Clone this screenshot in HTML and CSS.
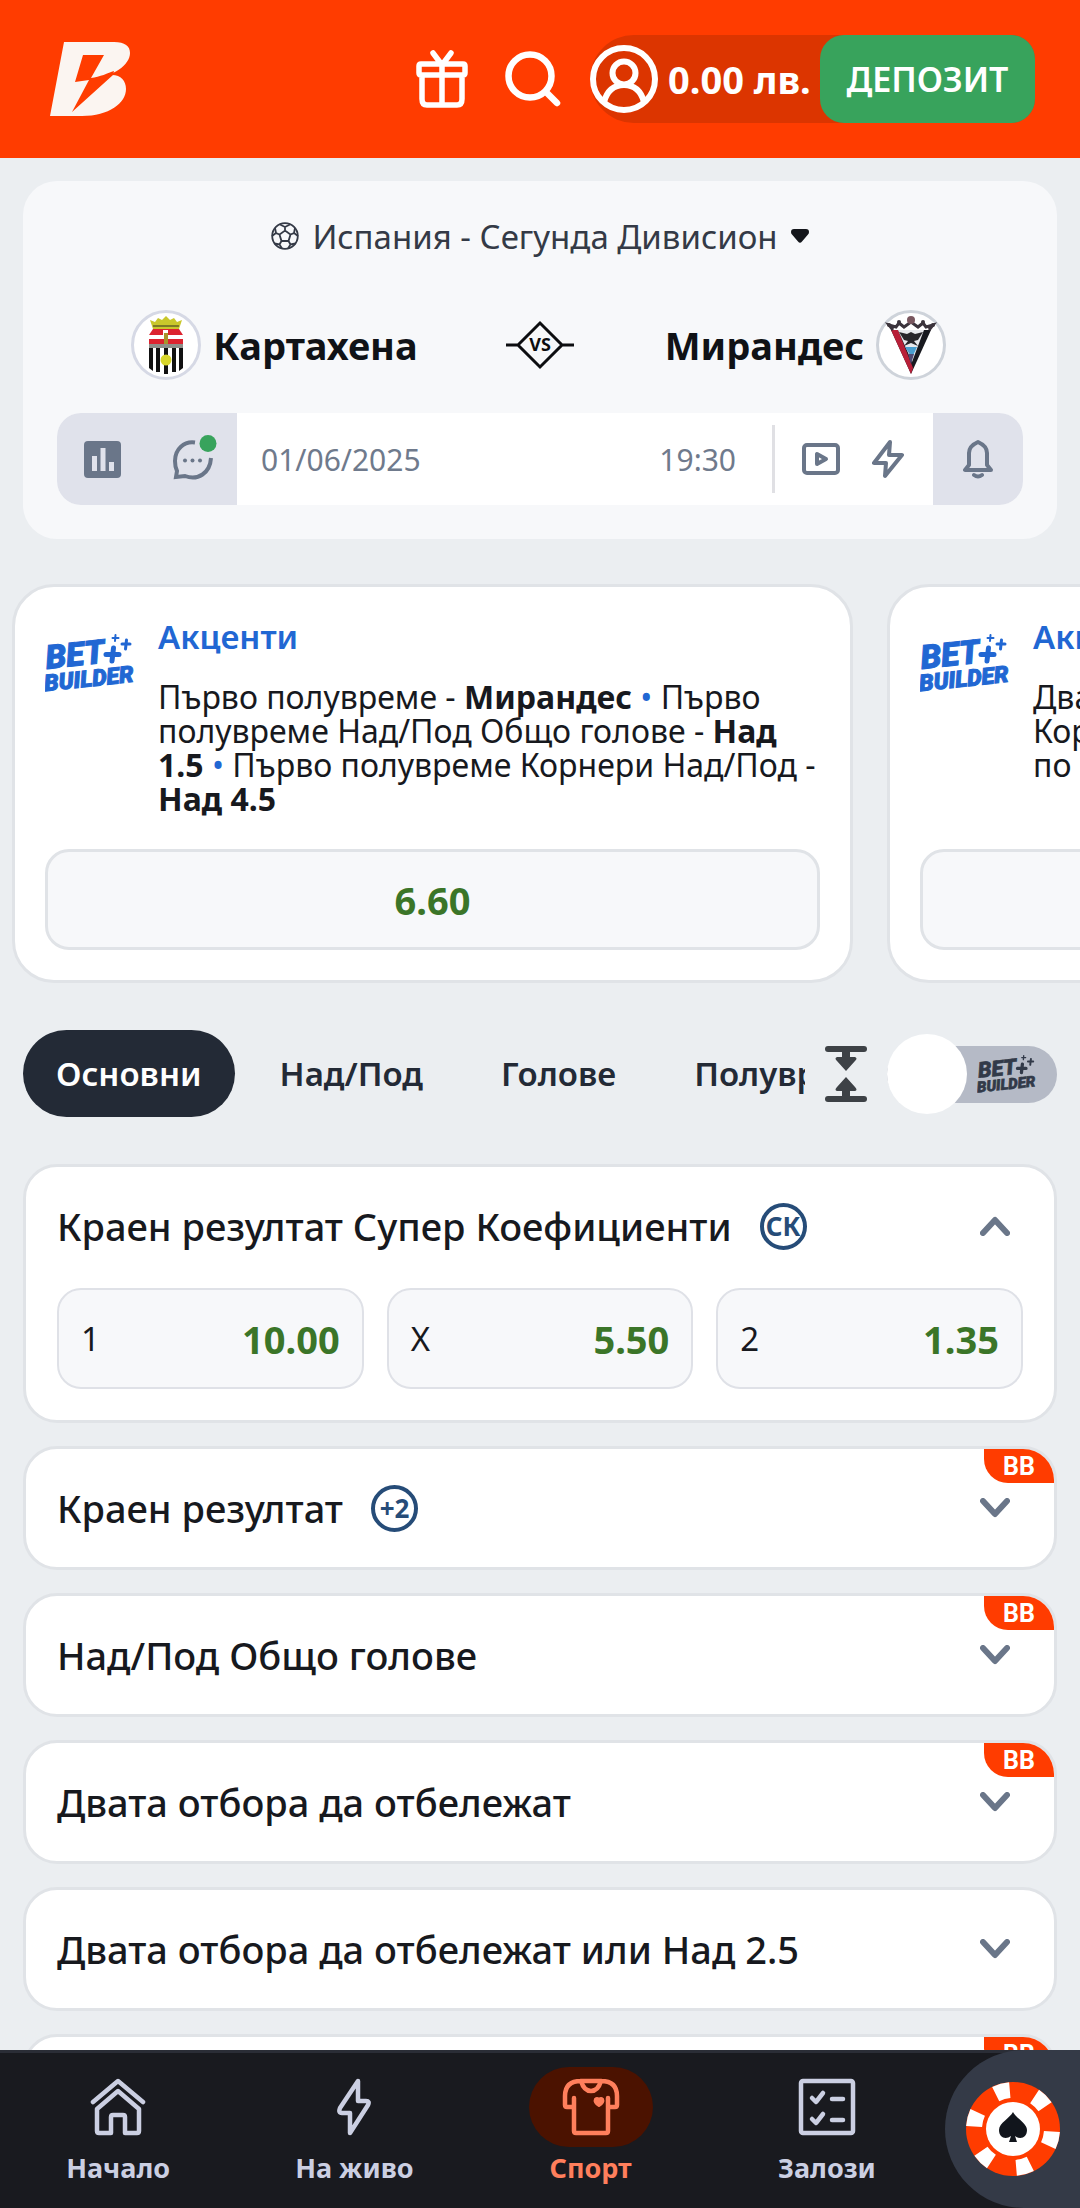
FILE: index.html
```html
<!DOCTYPE html>
<html lang="bg">
<head>
<meta charset="utf-8">
<meta name="viewport" content="width=device-width, initial-scale=1">
<title>Картахена - Мирандес</title>
<link rel="stylesheet" href="styles.css">
</head>
<body>
<svg class="defs" aria-hidden="true">
  <symbol id="sparks" viewBox="0 0 90 58">
    <g stroke="currentColor" stroke-linecap="round">
      <path stroke-width="5" d="M61 20.500h13M68.500 14l-1.500 13"/>
      <path stroke-width="3" d="M77 10h8M81.500 6l-1 9"/>
      <path stroke-width="2" d="M67.500 4h6M70.500 1l-.500 6"/>
    </g>
  </symbol>
  <symbol id="chevron" viewBox="0 0 30 20"><path d="M3 3l12 13L27 3" fill="none" stroke="currentColor" stroke-width="6" stroke-linecap="round" stroke-linejoin="round"/></symbol>
</svg>
<div class="app">
  <header class="topbar">
    <a class="brand" href="#" aria-label="Начало">
      <svg width="80" height="76" viewBox="0 0 80 76"><path fill="#fbf5f1" d="M14 1h50c11 0 16 4 16 11 0 12-17 24-39 26 7-2 13-4 21-4 9 0 14 6 14 14 0 14-17 27-44 27H0z"/><path fill="#ff3c00" d="M33 14h21L41 37c9-1 17-5 23-7l-1 4L22 71l17-32-14 2z"/></svg>
    </a>
    <button class="icon-btn" aria-label="Подаръци">
      <svg width="52" height="58" viewBox="0 0 52 58" fill="none" stroke="#fff" stroke-width="5.500" stroke-linecap="round" stroke-linejoin="round"><path d="M17 3l9 12 9-12M5 14h42q2 0 2 2v7q0 2-2 2H5q-2 0-2-2v-7q0-2 2-2zM6 26v23q0 6 5 6h30q5 0 5-6V26M26 14v41"/></svg>
    </button>
    <button class="icon-btn" aria-label="Търсене">
      <svg width="56" height="56" viewBox="0 0 56 56" fill="none" stroke="#fff" stroke-width="6.500" stroke-linecap="round"><circle cx="25" cy="25" r="21.500"/><path d="M41 41l11 11"/></svg>
    </button>
    <div class="wallet">
      <button class="account">
        <svg width="68" height="68" viewBox="0 0 68 68" fill="none" stroke="#fff" stroke-width="6"><circle cx="34" cy="34" r="31"/><circle cx="34" cy="28" r="11.500"/><path d="M14 57c3-11 10-17 20-17s17 6 20 17"/></svg>
        <span>0.00 лв.</span>
      </button>
      <button class="deposit">ДЕПОЗИТ</button>
    </div>
  </header>

  <main class="content">
    <section class="match">
      <button class="league">
        <svg width="28" height="28" viewBox="0 0 28 28" fill="none" stroke="#343a46" stroke-width="1.800"><circle cx="14" cy="14" r="12.800"/><path d="M14 8.500l5.500 4-2 6.500h-7l-2-6.500zM14 8.500V5l-5-2.500M14 5l5-2.500M19.500 12.500l3.500-1.500 1-5M23 11l4 3M17.500 19l2 3.500 5-1M19.500 22.500L17 26.500M10.500 19l-2 3.500-5-1M8.500 22.500l2.500 4M8.500 12.500L5 11 4 6M5 11l-4 3"/></svg>
        <span>Испания - Сегунда Дивисион</span>
        <svg width="18" height="14" viewBox="0 0 18 14"><path fill="#14161b" d="M3 0h12q3 0 3 3 0 1.500-1 2.500l-6 7q-2 2.500-4 0l-6-7Q0 4.500 0 3q0-3 3-3z"/></svg>
      </button>
      <div class="teams">
        <div class="team">
          <svg class="crest" width="70" height="70" viewBox="0 0 70 70"><circle cx="35" cy="35" r="33.500" fill="#fff" stroke="#d6d9e5" stroke-width="3"/><path fill="#c9c72b" d="M19 10l5 2 3-4 4 2 4-4 4 4 4-2 3 4 5-2-3 9H22z"/><path fill="#7c7a25" d="M22 15h26v2H22z"/><path fill="#dc2430" d="M22 19h26l4 6v12H18V25z"/><path fill="#fff" d="M32 20h5v5h15v4H18v-4h14z"/><path fill="#a8942c" d="M33 23h4v11h-4z"/><path fill="#8d8f8a" d="M18 34h34v4H18z"/><path fill="#fff" d="M18 38h34v21l-4 3H22l-4-3z"/><path fill="#111" d="M18 38h4v23l-4-3zM25 38h4v24h-4zM33 38h4v26h-4zM41 38h4v24h-4zM48 38h4v20l-4 3z"/><circle cx="35" cy="50" r="5.500" fill="#d8d62b"/></svg>
          <strong>Картахена</strong>
        </div>
        <svg class="versus" width="68" height="52" viewBox="0 0 68 52" fill="none" stroke="#0c0d10" stroke-width="3"><path d="M0 26h12M56 26h12M12 26L34 4l22 22-22 22z"/><text class="versus-type" x="34" y="32" text-anchor="middle" stroke="none">VS</text></svg>
        <div class="team">
          <strong>Мирандес</strong>
          <svg class="crest" width="70" height="70" viewBox="0 0 70 70"><circle cx="35" cy="35" r="33.500" fill="#fff" stroke="#ced3da" stroke-width="3"/><path fill="#18191f" d="M15 20h40L35 64z"/><path fill="#b81f38" d="M15 20h7l15 38-2 6z"/><path fill="#e9eaee" d="M22 20h26L36 52z"/><path fill="#28262b" d="M23 22l8 2 4-2 4 2 8-2-5 8-4 1 4 5-7-3-7 3 4-5-4-1z"/><path fill="#4b9fd0" d="M29 37h12l-5 11z"/><path fill="#4e4b75" d="M32 44h6l-3 10z"/><path d="M17 20l-4-5 7 2 3-4 5 4 7-5 7 5 5-4 3 4 7-2-4 5" fill="none" stroke="#3b343c" stroke-width="3"/><g fill="#3b343c"><circle cx="13" cy="15" r="2"/><circle cx="23" cy="12" r="2"/><circle cx="47" cy="12" r="2"/><circle cx="57" cy="15" r="2"/></g><circle cx="35" cy="10" r="4" fill="#79575f"/></svg>
        </div>
      </div>
      <div class="infobar">
        <button class="info-btn shaded" aria-label="Статистика"><svg width="37" height="37" viewBox="0 0 37 37"><rect width="37" height="37" rx="4" fill="#6a7689"/><path fill="#e0e2eb" d="M8 15h5v15H8zM16.500 7h5v23h-5zM25 21h5v9h-5z"/></svg></button>
        <button class="info-btn shaded" aria-label="Чат"><svg width="50" height="50" viewBox="-3 -2 50 50" fill="none"><g transform="translate(3)"><path stroke="#6a7689" stroke-width="4" d="M22 6.500C11 5 2 13 2 25q0 6 2 10L3 41l9-1c13 5 25-3 26-18"/><g fill="#6a7689"><circle cx="12" cy="24.500" r="2"/><circle cx="19.500" cy="24.500" r="2"/><circle cx="27" cy="24.500" r="2"/></g></g><circle cx="38" cy="7.500" r="8.500" fill="#38a35c"/></svg></button>
        <div class="schedule"><time>01/06/2025</time><time>19:30</time></div>
        <div class="media">
          <button class="media-btn" aria-label="Видео"><svg width="38" height="32" viewBox="0 0 38 32" fill="none" stroke="#6a7689" stroke-width="4" stroke-linejoin="round"><rect x="2" y="2" width="34" height="28" rx="3"/><path d="M15 11v10l9-5z"/></svg></button>
          <button class="media-btn" aria-label="На живо"><svg width="32" height="38" viewBox="0 0 32 38" fill="none" stroke="#6a7689" stroke-width="4" stroke-linejoin="round"><path d="M18 2L2 23h12l-1 13 17-21H17z"/></svg></button>
        </div>
        <button class="info-btn shaded" aria-label="Известия"><svg width="32" height="40" viewBox="0 0 32 40" fill="none" stroke="#6a7689" stroke-width="4" stroke-linejoin="round" stroke-linecap="round"><path d="M3 31h26l-4-5V14q0-7-9-11Q7 7 7 14v12zM12 36q4 3 8 0"/></svg></button>
      </div>
    </section>

    <section class="highlights">
      <article class="combo">
        <div class="combo-info">
          <svg class="bb-logo" width="90" height="58" viewBox="0 0 90 58" role="img" aria-label="Bet Builder"><g class="logo-type" transform="rotate(-6 2 56)"><text x="4" y="35" font-size="33">BET</text><text x="0" y="57" font-size="23">BUILDER</text></g><use href="#sparks"/></svg>
          <div class="combo-text">
            <h2>Акценти</h2>
            <p>Първо полувреме - <b>Мирандес</b> <i>•</i> Първо полувреме Над/Под Общо голове - <b>Над 1.5</b> <i>•</i> Първо полувреме Корнери Над/Под - <b>Над 4.5</b></p>
          </div>
        </div>
        <button class="combo-odds">6.60</button>
      </article>
      <article class="combo">
        <div class="combo-info">
          <svg class="bb-logo" width="90" height="58" viewBox="0 0 90 58" role="img" aria-label="Bet Builder"><g class="logo-type" transform="rotate(-6 2 56)"><text x="4" y="35" font-size="33">BET</text><text x="0" y="57" font-size="23">BUILDER</text></g><use href="#sparks"/></svg>
          <div class="combo-text">
            <h2>Акценти</h2>
            <p>Двата<br>Корнери<br>по</p>
          </div>
        </div>
        <button class="combo-odds" aria-label="Коефициент"></button>
      </article>
    </section>

    <div class="filters">
      <nav class="tabs">
        <button class="tab active">Основни</button>
        <button class="tab">Над/Под</button>
        <button class="tab">Голове</button>
        <button class="tab">Полувреме</button>
      </nav>
      <button class="collapse" aria-label="Свий всички"><svg width="42" height="56" viewBox="0 0 42 56" fill="#3d4146"><rect width="42" height="6" rx="3"/><rect y="50" width="42" height="6" rx="3"/><path d="M17 5h8v6h5q3 1 0 4l-9 10-9-10q-3-3 0-4h5zM17 51h8v-6h5q3-1 0-4l-9-10-9 10q-3 3 0 4h5z"/></svg></button>
      <label class="bb-switch">
        <input type="checkbox" role="switch" aria-label="Bet Builder">
        <svg width="60" height="38" viewBox="0 0 90 58"><g class="logo-type" transform="rotate(-6 2 56)"><text x="4" y="35" font-size="33">BET</text><text x="0" y="57" font-size="23">BUILDER</text></g><use href="#sparks"/></svg>
      </label>
    </div>

    <section class="markets">
      <article class="market">
        <button class="market-head"><span>Краен резултат Супер Коефициенти</span><span class="ring">СК</span><svg class="arrow up" width="30" height="20"><use href="#chevron"/></svg></button>
        <div class="odds">
          <button class="odd"><span>1</span><b>10.00</b></button>
          <button class="odd"><span>X</span><b>5.50</b></button>
          <button class="odd"><span>2</span><b>1.35</b></button>
        </div>
      </article>
      <article class="market">
        <button class="market-head"><span>Краен резултат</span><span class="ring">+2</span><svg class="arrow" width="30" height="20"><use href="#chevron"/></svg></button>
        <span class="flag">BB</span>
      </article>
      <article class="market">
        <button class="market-head"><span>Над/Под Общо голове</span><svg class="arrow" width="30" height="20"><use href="#chevron"/></svg></button>
        <span class="flag">BB</span>
      </article>
      <article class="market">
        <button class="market-head"><span>Двата отбора да отбележат</span><svg class="arrow" width="30" height="20"><use href="#chevron"/></svg></button>
        <span class="flag">BB</span>
      </article>
      <article class="market">
        <button class="market-head"><span>Двата отбора да отбележат или Над 2.5</span><svg class="arrow" width="30" height="20"><use href="#chevron"/></svg></button>
      </article>
      <article class="market">
        <button class="market-head" aria-label="Пазар"><svg class="arrow" width="30" height="20"><use href="#chevron"/></svg></button>
        <span class="flag">BB</span>
      </article>
    </section>
  </main>

  <nav class="bottombar">
    <a class="nav-item" href="#"><span class="nav-icon"><svg width="56" height="58" viewBox="0 0 56 58" fill="none" stroke="currentColor" stroke-width="4.500" stroke-linecap="round" stroke-linejoin="round"><path d="M3 24L28 3l25 21M7 31L28 13l21 18v22q0 2-2 2H35V39q0-2-2-2H23q-2 0-2 2v16H9q-2 0-2-2z"/></svg></span>Начало</a>
    <a class="nav-item" href="#"><span class="nav-icon"><svg width="34" height="58" viewBox="0 0 34 58" fill="none" stroke="currentColor" stroke-width="4.500" stroke-linejoin="round"><path d="M21 3L3 30q-2 5 2 5h8v20l18-28q2-4-2-4h-8z"/></svg></span>На живо</a>
    <a class="nav-item current" href="#"><span class="nav-icon"><svg width="58" height="58" viewBox="0 0 58 58" fill="none" stroke="currentColor" stroke-width="4.500" stroke-linecap="round" stroke-linejoin="round"><path d="M12 20v33q0 2 2 2h30q2 0 2-2V20M12 29H5q-2 0-2-2V18Q3 3 19 3h20q16 0 16 15v9q0 2-2 2h-7M19 3q3 10 10 10T39 3"/><path fill="currentColor" stroke-width="2" d="M37 28c-4-2-5-5-4-7q2-2 4 0 2-2 4 0c1 2 0 5-4 7z"/></svg></span>Спорт</a>
    <a class="nav-item" href="#"><span class="nav-icon"><svg width="58" height="58" viewBox="0 0 58 58" fill="none" stroke="currentColor" stroke-width="4.500" stroke-linecap="round" stroke-linejoin="round"><rect x="3" y="3" width="52" height="52" rx="2"/><path d="M14 20l4 4 7-9M34 21h11M14 41l4 4 7-9M34 42h11"/></svg></span>Залози</a>
    <a class="casino" href="#" aria-label="Казино"><svg width="94" height="94" viewBox="0 0 94 94"><circle cx="47" cy="47" r="47" fill="#ff3c00"/><circle cx="47" cy="47" r="39" fill="none" stroke="#fff" stroke-width="16" pathLength="60" stroke-dasharray="3.600 6.400" stroke-dashoffset="-.600"/><circle cx="47" cy="47" r="27" fill="#fff"/><path fill="#11151c" d="M47 30c3 6 14 11 14 18 0 8-7 10-12 6l2 6h-8l2-6c-5 4-12 2-12-6 0-7 11-12 14-18z"/></svg></a>
  </nav>
</div>
</body>
</html>
```

FILE: styles.css
```css
* { box-sizing: border-box; }

body {
  margin: 0;
  background: #ebeef1;
  color: #17191e;
  font-family: "Noto Sans", "Open Sans", sans-serif;
  font-feature-settings: "locl" 0;
}

button {
  margin: 0;
  padding: 0;
  border: 0;
  background: none;
  color: inherit;
  font: inherit;
  cursor: pointer;
}

svg { display: block; flex: none; }

.defs { position: absolute; width: 0; height: 0; }

.logo-type { fill: currentColor; stroke: currentColor; stroke-width: 1px; font-family: Roboto, sans-serif; font-weight: 900; font-style: italic; }

.app { display: flex; flex-direction: column; height: 100vh; }

/* Top bar */
.topbar {
  flex: none;
  display: flex;
  align-items: center;
  height: 158px;
  padding: 0 45px 0 50px;
  background: #ff3c00;
  color: #fff;
}
.brand { margin-right: auto; }
.icon-btn { display: grid; place-items: center; width: 91px; height: 88px; }
.wallet {
  display: flex;
  height: 88px;
  margin-left: 12px;
  border-radius: 44px 24px 24px 44px;
  background: #dc3500;
}
.account { display: flex; align-items: center; gap: 10px; width: 230px; font-size: 38px; font-weight: 700; white-space: nowrap; }
.deposit { width: 215px; border-radius: 24px; background: #38a35c; font-size: 34px; font-weight: 600; }

.content { flex: 1; min-height: 0; overflow: hidden; padding-top: 23px; }

/* Match card */
.match { margin: 0 23px; padding: 32px 34px 34px; border-radius: 34px; background: #f7f8fa; }
.league { display: flex; align-items: center; justify-content: center; gap: 13px; width: 100%; height: 46px; color: #343a46; font-size: 33px; }
.teams { display: grid; grid-template-columns: 1fr 96px 1fr; align-items: center; height: 70px; margin: 51px 0 33px; }
.versus { justify-self: center; }
.versus-type { fill: #0c0d10; font-size: 18px; font-weight: 700; }
.team { display: flex; align-items: center; justify-content: center; gap: 12px; color: #101216; font-size: 38px; }
.infobar { display: flex; height: 92px; overflow: hidden; border-radius: 24px; background: #fff; color: #6f7a8c; font-size: 30px; }
.info-btn { display: grid; place-items: center; width: 90px; }
.shaded { background: #e0e2eb; }
.schedule { flex: 1; display: flex; align-items: center; justify-content: space-between; margin: 12px 0; padding: 0 36px 0 24px; border-right: 3px solid #e0e0e4; }
.media { display: flex; padding: 0 12px; }
.media-btn { display: grid; place-items: center; width: 67px; }

/* Highlight carousel */
.highlights { display: flex; gap: 34px; margin-top: 45px; padding-left: 12px; overflow: hidden; }
.combo { flex: none; display: flex; flex-direction: column; width: 841px; height: 399px; padding: 30px; border: 3px solid #e0e3e7; border-radius: 42px; background: #fff; }
.combo-info { display: flex; gap: 23px; flex: 1; }
.bb-logo { margin-top: 17px; color: #2167d3; }
.combo h2 { margin: 0 0 23px; color: #2167d3; font-size: 33px; line-height: 40px; font-weight: 600; }
.combo p { margin: 0; font-size: 32px; line-height: 34px; }
.combo i { color: #2167d3; font-style: normal; }
.combo-odds { height: 101px; border: 3px solid #e0e3e7; border-radius: 24px; background: #f7f8fa; color: #3b7528; font-size: 38px; font-weight: 700; }

/* Market filters */
.filters { display: flex; align-items: center; height: 87px; margin: 47px 23px; }
.tabs { flex: 1; display: flex; gap: 12px; height: 100%; min-width: 0; overflow: hidden; color: #232a36; font-size: 33px; font-weight: 600; }
.tab { flex: none; padding: 0 33px; border-radius: 44px; }
.tab.active { background: #232a36; color: #fff; }
.collapse { margin: 0 20px; }
.bb-switch { position: relative; display: flex; align-items: center; justify-content: flex-end; width: 170px; height: 80px; padding-right: 20px; color: #323a49; }
.bb-switch input { position: absolute; inset: 12px 0; width: 170px; height: 57px; margin: 0; appearance: none; border-radius: 29px; background: #b5bac6; }
.bb-switch input::before { content: ""; position: absolute; top: -12px; left: 0; width: 80px; height: 80px; border-radius: 50%; background: #fff; }
.bb-switch svg { position: relative; }

/* Markets */
.markets { display: grid; gap: 23px; margin: 0 23px; }
.market { position: relative; overflow: hidden; border: 3px solid #e0e3e7; border-radius: 34px; background: #fff; }
.market-head { display: flex; align-items: center; gap: 28px; width: 100%; height: 118px; padding: 0 44px 0 31px; font-size: 38px; line-height: 48px; font-weight: 500; text-align: left; }
.ring { display: grid; place-items: center; width: 47px; height: 47px; border: 4px solid #264c78; border-radius: 50%; color: #264c78; font-size: 26px; line-height: 36px; font-weight: 700; }
.arrow { margin-left: auto; color: #6a7689; }
.arrow.up { transform: rotate(180deg); }
.flag { position: absolute; top: 0; right: 0; width: 70px; height: 34px; border-bottom-left-radius: 24px; background: #ff3c00; color: #fff; font: 700 25px/36px Roboto, sans-serif; text-align: center; }
.odds { display: grid; grid-template-columns: repeat(3, 1fr); gap: 23px; padding: 3px 31px 31px; }
.odd { display: flex; align-items: center; justify-content: space-between; height: 101px; padding: 0 22px; border: 2px solid #dfe1e7; border-radius: 24px; background: #f7f8fa; font-size: 33px; }
.odd b { color: #3b7528; font-size: 38px; }

/* Bottom navigation */
.bottombar { flex: none; display: flex; height: 158px; border-top: 3px solid #2a2d36; background: #191a1f; }
.nav-item { flex: 1; display: flex; flex-direction: column; align-items: center; padding-top: 14px; color: #cbcfe2; font-size: 27px; line-height: 42px; font-weight: 700; text-decoration: none; }
.nav-icon { display: grid; place-items: center; width: 124px; height: 80px; border-radius: 40px; }
.nav-item.current { color: #ff7f5c; }
.current .nav-icon { background: #4b1200; }
.casino { flex: none; display: grid; place-items: center; width: 135px; margin-top: -3px; border-radius: 79px 0 0 79px; background: #343a47; }
```
